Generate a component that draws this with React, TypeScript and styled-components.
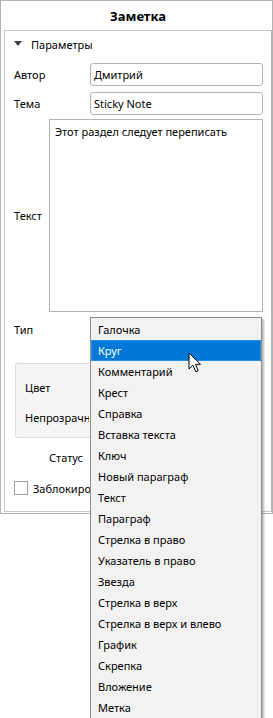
import React from "react";
import styled, { createGlobalStyle } from "styled-components";

const GlobalStyle = createGlobalStyle`
  html, body { margin: 0; padding: 0; background: #ffffff; }
  body { font-family: "Noto Sans", "Open Sans", sans-serif; font-size: 11px; color: #000; }
  * { box-sizing: border-box; }
`;

const Page = styled.div`
  position: relative;
  width: 273px;
  height: 718px;
  overflow: hidden;
`;

const Panel = styled.div`
  width: 273px;
  border: 1px solid #b4b4b4;
  padding: 0 0 1px 3px;
  background: #fff;
`;

const Title = styled.div`
  height: 29px;
  display: flex;
  align-items: center;
  justify-content: center;
  font-weight: bold;
  font-size: 13px;
`;

const Group = styled.div`
  border: 1px solid #c8c8c8;
  border-right-color: #b4b4b4;
  padding: 0 8px 13px 9px;
  display: flex;
  flex-direction: column;
`;

const Header = styled.div`
  height: 26px;
  display: flex;
  align-items: center;
  gap: 9px;
`;

const Caret = styled.span`
  width: 0;
  height: 0;
  border-left: 4px solid transparent;
  border-right: 4px solid transparent;
  border-top: 5px solid #404040;
  margin-bottom: 1px;
`;

const Row = styled.div<{ $mt: number; $h: number }>`
  display: flex;
  align-items: center;
  margin-top: ${(p) => p.$mt}px;
  height: ${(p) => p.$h}px;
`;

const Label = styled.div<{ $w: number }>`
  width: ${(p) => p.$w}px;
  flex: none;
  white-space: nowrap;
`;

const Input = styled.div`
  flex: 1;
  height: 100%;
  border: 1px solid #b4b4b4;
  border-radius: 3px;
  padding-left: 3px;
  display: flex;
  align-items: center;
`;

const TextArea = styled.div`
  flex: 1;
  height: 100%;
  border: 1px solid #b4b4b4;
  padding: 4px 0 0 5px;
`;

const ColorBox = styled.div`
  margin: 22px 3px 0 1px;
  height: 75px;
  background: #f5f5f5;
  border: 1px solid #dedede;
  border-radius: 2px;
  padding: 0 9px;
  display: flex;
  flex-direction: column;
`;

const ColorRow = styled.div<{ $mt: number }>`
  margin-top: ${(p) => p.$mt}px;
  height: 20px;
  width: 64px;
  display: flex;
  align-items: center;
  white-space: nowrap;
  overflow: hidden;
`;

const StatusRow = styled.div`
  margin-top: 9px;
  height: 20px;
  padding-left: 35px;
  display: flex;
  align-items: center;
`;

const CheckRow = styled.div`
  margin-top: 11px;
  height: 20px;
  width: 76px;
  display: flex;
  align-items: center;
  gap: 5px;
  white-space: nowrap;
  overflow: hidden;
`;

const Check = styled.span`
  width: 14px;
  height: 14px;
  border: 1px solid #a0a0a0;
  background: #fff;
  flex: none;
`;

const Popup = styled.div`
  position: absolute;
  left: 90px;
  top: 317px;
  width: 172px;
  background: #f2f2f2;
  border: 1px solid #8c8c8c;
  padding: 1px 0;
  box-shadow: 2px 2px 2px rgba(0, 0, 0, 0.28);
`;

const Item = styled.div<{ $active?: boolean }>`
  height: 21px;
  display: flex;
  align-items: center;
  padding-left: 7px;
  white-space: nowrap;
  background: ${(p) => (p.$active ? "#0078d7" : "transparent")};
  color: ${(p) => (p.$active ? "#fff" : "#000")};
  box-shadow: ${(p) => (p.$active ? "inset 0 0 0 1px #2a8fe0" : "none")};
`;

const Cursor = styled.svg`
  position: absolute;
  left: 188px;
  top: 352px;
`;

const items = [
  "Галочка",
  "Круг",
  "Комментарий",
  "Крест",
  "Справка",
  "Вставка текста",
  "Ключ",
  "Новый параграф",
  "Текст",
  "Параграф",
  "Стрелка в право",
  "Указатель в право",
  "Звезда",
  "Стрелка в верх",
  "Стрелка в верх и влево",
  "График",
  "Скрепка",
  "Вложение",
  "Метка",
];

export default function App() {
  return (
    <Page>
      <GlobalStyle />
      <Panel>
        <Title>Заметка</Title>
        <Group>
          <Header>
            <Caret />
            <span>Параметры</span>
          </Header>
          <Row $mt={6} $h={23}>
            <Label $w={76}>Автор</Label>
            <Input>Дмитрий</Input>
          </Row>
          <Row $mt={6} $h={23}>
            <Label $w={76}>Тема</Label>
            <Input>Sticky Note</Input>
          </Row>
          <Row $mt={4} $h={193}>
            <Label $w={35}>Текст</Label>
            <TextArea>Этот раздел следует переписать</TextArea>
          </Row>
          <Row $mt={6} $h={23}>
            <Label $w={76}>Тип</Label>
          </Row>
          <ColorBox>
            <ColorRow $mt={13}>Цвет</ColorRow>
            <ColorRow $mt={10}>Непрозрачность</ColorRow>
          </ColorBox>
          <StatusRow>Статус</StatusRow>
          <CheckRow>
            <Check />
            <span>Заблокировано</span>
          </CheckRow>
        </Group>
      </Panel>
      <Popup>
        {items.map((t, i) => (
          <Item key={t} $active={i === 1}>
            {t}
          </Item>
        ))}
      </Popup>
      <Cursor width="14" height="22" viewBox="0 0 14 22">
        <path
          d="M1 1 L1 17 L5 13.2 L7.8 19.8 L10.2 18.8 L7.5 12.3 L12.5 12.3 Z"
          fill="#fff"
          stroke="#000"
          strokeWidth="1"
          strokeLinejoin="miter"
        />
      </Cursor>
    </Page>
  );
}
